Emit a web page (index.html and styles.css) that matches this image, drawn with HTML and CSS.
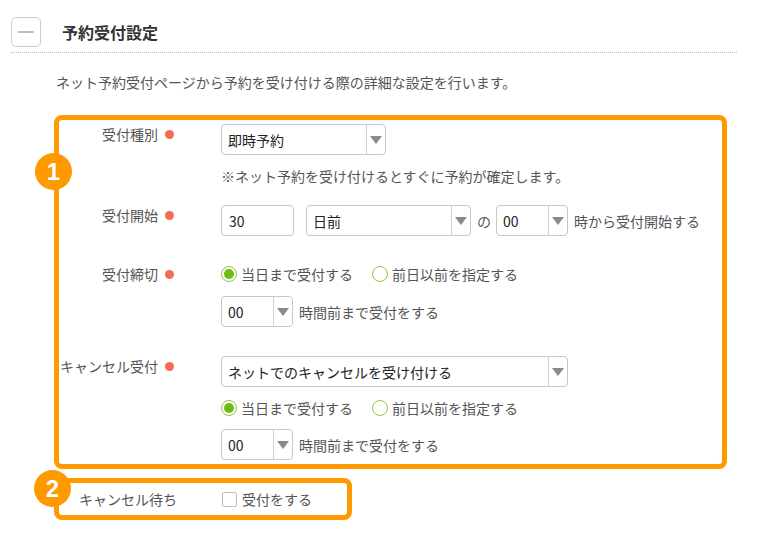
FILE: index.html
```html
<!DOCTYPE html>
<html lang="ja">
<head>
<meta charset="utf-8">
<link rel="stylesheet" href="styles.css">
</head>
<body>
<div class="page">
  <div class="header">
    <div class="toggle"><span class="minus"></span></div>
    <h1 class="title">予約受付設定</h1>
  </div>
  <div class="rule"></div>
  <p class="desc">ネット予約受付ページから予約を受け付ける際の詳細な設定を行います。</p>

  <div class="box box-main">
    <span class="badge badge-1">1</span>

    <div class="row row-type">
      <div class="label">受付種別<span class="req"></span></div>
      <div class="controls">
        <div class="select w-type"><span class="val">即時予約</span><span class="arrow"></span></div>
        <p class="note">※ネット予約を受け付けるとすぐに予約が確定します。</p>
      </div>
    </div>

    <div class="row row-start">
      <div class="label">受付開始<span class="req"></span></div>
      <div class="controls">
        <div class="line">
          <div class="input w-num">30</div>
          <div class="select w-day"><span class="val">日前</span><span class="arrow"></span></div>
          <span class="txt txt-no">の</span>
          <div class="select w-hour"><span class="val">00</span><span class="arrow"></span></div>
          <span class="txt">時から受付開始する</span>
        </div>
      </div>
    </div>

    <div class="row row-end">
      <div class="label">受付締切<span class="req"></span></div>
      <div class="controls">
        <div class="radios">
          <span class="radio on"></span><span class="txt">当日まで受付する</span>
          <span class="radio"></span><span class="txt">前日以前を指定する</span>
        </div>
        <div class="line line-hours">
          <div class="select w-hour"><span class="val">00</span><span class="arrow"></span></div>
          <span class="txt">時間前まで受付をする</span>
        </div>
      </div>
    </div>

    <div class="row row-cancel">
      <div class="label">キャンセル受付<span class="req"></span></div>
      <div class="controls">
        <div class="select w-cancel"><span class="val">ネットでのキャンセルを受け付ける</span><span class="arrow"></span></div>
        <div class="radios radios-cancel">
          <span class="radio on"></span><span class="txt">当日まで受付する</span>
          <span class="radio"></span><span class="txt">前日以前を指定する</span>
        </div>
        <div class="line line-hours">
          <div class="select w-hour"><span class="val">00</span><span class="arrow"></span></div>
          <span class="txt">時間前まで受付をする</span>
        </div>
      </div>
    </div>
  </div>

  <div class="box box-wait">
    <span class="badge badge-2">2</span>
    <span class="wait-label">キャンセル待ち</span>
    <span class="check"></span>
    <span class="txt">受付をする</span>
  </div>
</div>
</body>
</html>
```
FILE: styles.css
```css
* { box-sizing: border-box; }
html, body { margin: 0; padding: 0; background: #fff; }
body {
  font-family: "Noto Sans CJK JP", "Noto Sans", sans-serif;
  color: #555;
  font-size: 14px;
  line-height: 20px;
}
.page { padding: 17px 21px 0 11px; width: 758px; }

.header { display: flex; align-items: center; height: 30px; }
.toggle {
  width: 30px; height: 30px;
  border: 1px solid #ccc; border-radius: 5px;
  display: flex; align-items: center; justify-content: center;
}
.minus { width: 16px; height: 2px; background: #bbb; }
.title {
  margin: 0 0 0 21px;
  font-size: 16px; font-weight: bold; color: #333;
  line-height: 22px;
}
.rule { margin-top: 5px; border-top: 1px dotted #bbb; height: 0; }
.desc { margin: 19px 0 0 45px; font-size: 14px; line-height: 20px; color: #555; }

.box {
  position: relative;
  border: 5px solid #ff9900;
  border-radius: 8px;
  margin-left: 43px;
}
.box-main { margin-top: 23px; width: 673px; padding: 4px 0 4px 0; }

.badge {
  position: absolute;
  width: 37px; height: 37px; border-radius: 50%;
  background: #ff9900; color: #fff;
  font-family: "Liberation Sans", Arial, sans-serif;
  font-weight: bold; font-size: 24px;
  display: flex; align-items: center; justify-content: center;
}
.badge-1 { left: -24px; top: 33px; }
.badge-2 { left: -25px; top: -13px; }

.row { display: flex; align-items: flex-start; }
.label {
  width: 162px; padding-right: 63px;
  display: flex; justify-content: flex-end; align-items: center;
  height: 20px; white-space: nowrap; color: #555;
  font-size: 14px;
}
.req {
  width: 9px; height: 9px; border-radius: 50%;
  background: #f56a55; margin-left: 7px; margin-right: -16px;
}
.controls { display: flex; flex-direction: column; align-items: flex-start; }

.select, .input {
  height: 31px; border: 1px solid #c8c8c8; border-radius: 4px;
  display: flex; align-items: center; background: #fff;
  color: #222; font-size: 14px;
}
.input { padding-left: 7px; }
.select .val { flex: 1; padding-left: 6px; white-space: nowrap; }
.select .arrow {
  width: 19px; height: 100%;
  border-left: 1px solid #d0d0d0;
  display: flex; align-items: center; justify-content: center;
}
.select .arrow::after {
  content: ""; display: block;
  border-left: 6px solid transparent; border-right: 6px solid transparent;
  border-top: 8px solid #8a8a8a;
}
.w-type { width: 165px; }
.w-num { width: 73px; }
.w-day { width: 165px; margin-left: 12px; }
.w-hour { width: 72px; }
.w-cancel { width: 347px; }

.note { margin: 11px 0 0 0; color: #555; }
.line { display: flex; align-items: center; }
.txt { white-space: nowrap; color: #555; }
.txt-no { margin: 0 5px 0 6px; }
.line .w-hour + .txt { margin-left: 6px; }

.row-start { margin-top: 19px; }
.row-end { margin-top: 28px; }
.row-cancel { margin-top: 29px; }
.line-hours { margin-top: 12px; }
.row-cancel .line-hours { margin-top: 11px; }
.radios-cancel { margin-top: 11px; }

.radios { display: flex; align-items: center; height: 20px; }
.radio {
  width: 16px; height: 16px; border-radius: 50%;
  border: 1.5px solid #8cc63f; background: #fff;
  display: flex; align-items: center; justify-content: center;
  margin-right: 4px;
}
.radio.on::after {
  content: ""; width: 10px; height: 10px; border-radius: 50%; background: #6cbd12;
}
.radios .txt + .radio { margin-left: 19px; }

.box-wait {
  margin-top: 9px; width: 298px; height: 42px;
  display: flex; align-items: center; padding-left: 20px;
}
.wait-label { width: 143px; color: #555; white-space: nowrap; font-size: 14px; }
.check {
  width: 15px; height: 15px; border: 1px solid #bbb; border-radius: 2px; margin-right: 5px;
}
```
